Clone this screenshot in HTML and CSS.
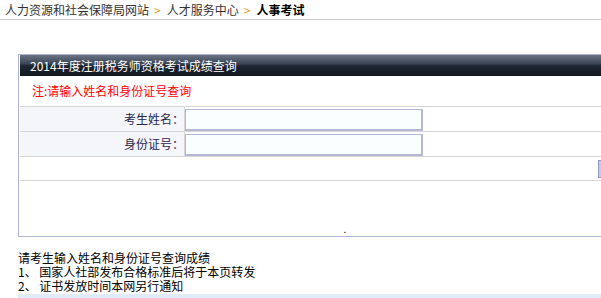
FILE: index.html
```html
<!DOCTYPE html>
<html lang="zh-CN">
<head>
<meta charset="utf-8">
<title>人事考试</title>
<link rel="stylesheet" href="styles.css">
</head>
<body>
<div class="crumb">
  <span>人力资源和社会保障局网站</span><span class="sep">&gt;</span><span>人才服务中心</span><span class="sep">&gt;</span><b class="cur">人事考试</b>
</div>
<div class="main">
  <div class="panel">
    <div class="panel-head">2014年度注册税务师资格考试成绩查询</div>
    <div class="note">注:请输入姓名和身份证号查询</div>
    <div class="form">
      <div class="row">
        <div class="label">考生姓名：</div>
        <div class="field"><input class="inp" type="text"></div>
      </div>
      <div class="row">
        <div class="label">身份证号：</div>
        <div class="field"><input class="inp" type="text"></div>
      </div>
      <div class="row row-btn">
        <span class="btn"></span>
      </div>
    </div>
    <div class="dot">.</div>
  </div>
  <div class="info">
    <div>请考生输入姓名和身份证号查询成绩</div>
    <div>1、 国家人社部发布合格标准后将于本页转发</div>
    <div>2、 证书发放时间本网另行通知</div>
  </div>
  <div class="bar"></div>
</div>
</body>
</html>
```

FILE: styles.css
```css
html, body {
  margin: 0;
  padding: 0;
  overflow: hidden;
  background: #fff;
}
body {
  font-family: "Noto Sans CJK SC", "Liberation Sans", sans-serif;
  font-size: 12px;
  color: #000;
  width: 601px;
  height: 298px;
}
.crumb {
  height: 19px;
  line-height: 19px;
  padding-left: 5px;
  color: #333;
  border-bottom: 1px solid #c8c8c8;
  white-space: nowrap;
}
.crumb .sep {
  color: #e8a12c;
  margin: 0 6px 0 5px;
}
.crumb .cur {
  color: #000;
  font-weight: bold;
}
.main {
  margin-left: 18px;
  margin-top: 34px;
  width: 583px;
}
.panel {
  width: 650px;
  border: 1px solid #b2b5d6;
  padding: 0 1px;
}
.panel-head {
  height: 21px;
  line-height: 21px;
  padding-left: 10px;
  color: #fff;
  background: linear-gradient(#6a7384 0%, #3c4757 40%, #1d2631 52%, #111820 100%);
  white-space: nowrap;
}
.note {
  height: 30px;
  line-height: 30px;
  padding-left: 12px;
  color: #ff0000;
}
.form {
  border-top: 1px solid #d6d6d8;
}
.row {
  display: flex;
  height: 24px;
  border-bottom: 1px solid #d6d6d8;
}
.label {
  width: 165px;
  flex: none;
  background: #f5f6fa;
  border-right: 1px solid #d6d6d8;
  text-align: right;
  padding-right: 0;
  box-sizing: border-box;
  line-height: 24px;
  color: #262650;
}
.field {
  display: flex;
  align-items: center;
  padding-top: 1px;
}
.inp {
  width: 238px;
  height: 22px;
  box-sizing: border-box;
  border: 1px solid #b4b8d6;
  border-right-width: 2px;
  border-bottom-width: 2px;
  background: #f8fffe;
  margin: 0;
  padding: 0 2px;
  outline: none;
}
.row-btn {
  height: 23px;
  align-items: center;
  padding-left: 578px;
}
.btn {
  display: block;
  width: 30px;
  height: 18px;
  box-sizing: border-box;
  border: 1px solid #8e97c8;
  background: #c5cbe6;
}
.dot {
  height: 55px;
  line-height: 14px;
  text-align: center;
  display: flex;
  align-items: flex-end;
  justify-content: center;
  font-size: 10px;
}
.info {
  margin-top: 14px;
  line-height: 14px;
  white-space: nowrap;
}
.bar {
  margin-top: 1px;
  height: 6px;
  background: #e1ecfb;
}
```
